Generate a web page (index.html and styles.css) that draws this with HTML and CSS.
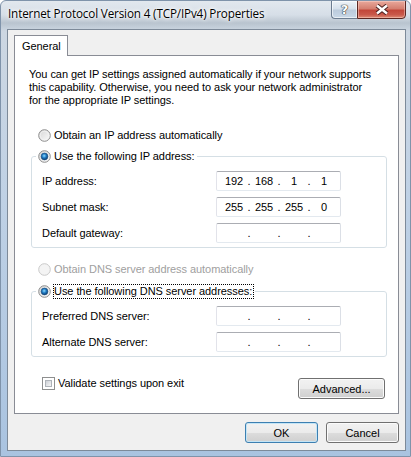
FILE: index.html
```html
<!DOCTYPE html>
<html>
<head>
<meta charset="utf-8">
<link rel="stylesheet" href="styles.css">
</head>
<body>
<div class="window">
  <div class="titlebar">
    <div class="title">Internet Protocol Version 4 (TCP/IPv4) Properties</div>
    <div class="caption-btns">
      <div class="cbtn help">?</div>
      <div class="cbtn close">
        <svg width="14" height="11" viewBox="0 0 14 11">
          <path d="M2 1.5 L12 9.5 M12 1.5 L2 9.5" stroke="#4a2020" stroke-width="4.4" fill="none"/>
          <path d="M2 1.5 L12 9.5 M12 1.5 L2 9.5" stroke="#ffffff" stroke-width="2.4" fill="none"/>
        </svg>
      </div>
    </div>
  </div>
  <div class="client">
    <div class="tabs"><div class="tab">General</div></div>
    <div class="page">
      <p class="intro">You can get IP settings assigned automatically if your network supports<br>this capability. Otherwise, you need to ask your network administrator<br>for the appropriate IP settings.</p>

      <div class="radio-row r-first">
        <svg class="radio" width="13" height="13" viewBox="0 0 13 13">
          <defs><linearGradient id="ru1" x1="0" y1="0" x2="1" y2="1"><stop offset="0" stop-color="#d4d4d4"/><stop offset="1" stop-color="#fcfcfc"/></linearGradient></defs>
          <circle cx="6.5" cy="6.5" r="5.8" fill="url(#ru1)" stroke="#8d8d8d" stroke-width="1"/>
          <circle cx="6.5" cy="6.5" r="4.3" fill="none" stroke="#f4f4f4" stroke-width="0.8"/>
        </svg>
        <span>Obtain an IP address automatically</span>
      </div>

      <fieldset class="group g-ip">
        <legend class="legend">
          <svg class="radio" width="13" height="13" viewBox="0 0 13 13">
            <defs><radialGradient id="rc1" cx="0.45" cy="0.4" r="0.6"><stop offset="0" stop-color="#8fdcff"/><stop offset="0.5" stop-color="#1f7bc4"/><stop offset="1" stop-color="#0b3a6a"/></radialGradient>
            <linearGradient id="ru2" x1="0" y1="0" x2="1" y2="1"><stop offset="0" stop-color="#d4d4d4"/><stop offset="1" stop-color="#fcfcfc"/></linearGradient></defs>
            <circle cx="6.5" cy="6.5" r="5.8" fill="url(#ru2)" stroke="#8d8d8d" stroke-width="1"/>
            <circle cx="6.5" cy="6.5" r="3.4" fill="url(#rc1)" stroke="#1a4f83" stroke-width="0.6"/>
          </svg>
          <span>Use the following IP address:</span>
        </legend>
        <div class="field-grid">
          <span class="lbl">IP address:</span>
          <div class="ipbox"><span class="seg">192</span><span class="dot">.</span><span class="seg">168</span><span class="dot">.</span><span class="seg">1</span><span class="dot">.</span><span class="seg">1</span></div>
          <span class="lbl">Subnet mask:</span>
          <div class="ipbox"><span class="seg">255</span><span class="dot">.</span><span class="seg">255</span><span class="dot">.</span><span class="seg">255</span><span class="dot">.</span><span class="seg">0</span></div>
          <span class="lbl">Default gateway:</span>
          <div class="ipbox"><span class="seg"></span><span class="dot">.</span><span class="seg"></span><span class="dot">.</span><span class="seg"></span><span class="dot">.</span><span class="seg"></span></div>
        </div>
      </fieldset>

      <div class="radio-row r-dns disabled">
        <svg class="radio" width="13" height="13" viewBox="0 0 13 13">
          <circle cx="6.5" cy="6.5" r="5.8" fill="#f4f4f4" stroke="#c9c9c9" stroke-width="1"/>
        </svg>
        <span>Obtain DNS server address automatically</span>
      </div>

      <fieldset class="group g-dns">
        <legend class="legend">
          <svg class="radio" width="13" height="13" viewBox="0 0 13 13">
            <defs><radialGradient id="rc2" cx="0.45" cy="0.4" r="0.6"><stop offset="0" stop-color="#8fdcff"/><stop offset="0.5" stop-color="#1f7bc4"/><stop offset="1" stop-color="#0b3a6a"/></radialGradient>
            <linearGradient id="ru3" x1="0" y1="0" x2="1" y2="1"><stop offset="0" stop-color="#d4d4d4"/><stop offset="1" stop-color="#fcfcfc"/></linearGradient></defs>
            <circle cx="6.5" cy="6.5" r="5.8" fill="url(#ru3)" stroke="#8d8d8d" stroke-width="1"/>
            <circle cx="6.5" cy="6.5" r="3.4" fill="url(#rc2)" stroke="#1a4f83" stroke-width="0.6"/>
          </svg>
          <span class="focus">Use the following DNS server addresses:</span>
        </legend>
        <div class="field-grid">
          <span class="lbl">Preferred DNS server:</span>
          <div class="ipbox"><span class="seg"></span><span class="dot">.</span><span class="seg"></span><span class="dot">.</span><span class="seg"></span><span class="dot">.</span><span class="seg"></span></div>
          <span class="lbl">Alternate DNS server:</span>
          <div class="ipbox"><span class="seg"></span><span class="dot">.</span><span class="seg"></span><span class="dot">.</span><span class="seg"></span><span class="dot">.</span><span class="seg"></span></div>
        </div>
      </fieldset>

      <div class="bottom-row">
        <div class="check-row">
          <span class="check"><span class="check-inner"></span></span>
          <span>Validate settings upon exit</span>
        </div>
        <button class="btn advanced">Advanced...</button>
      </div>
    </div>
    <div class="dialog-btns">
      <button class="btn ok">OK</button>
      <button class="btn cancel">Cancel</button>
    </div>
  </div>
</div>
</body>
</html>
```

FILE: styles.css
```css
html, body {
  margin: 0;
  padding: 0;
}
body {
  font-family: "Liberation Sans", Arial, sans-serif;
  font-size: 11px;
  line-height: 13px;
  letter-spacing: -0.06px;
  color: #000;
  background: #fff;
}
.window {
  width: 411px;
  height: 457px;
  box-sizing: border-box;
  border: 1px solid #7f93aa;
  border-radius: 6px 6px 0 0;
  overflow: hidden;
  display: flex;
  flex-direction: column;
  background: linear-gradient(to bottom, #e2e8ee 0px, #d6dee7 14px, #b9c4cf 22px, #cdd7e2 30px, #bfd1e5 200px, #a9c3e0 457px);
}
.titlebar {
  height: 28px;
  display: flex;
  justify-content: space-between;
  align-items: flex-start;
  flex: none;
}
.title {
  font-family: "Open Sans", "Liberation Sans", sans-serif;
  font-size: 11.7px;
  letter-spacing: -0.15px;
  padding: 4px 0 0 7px;
  line-height: 16px;
  color: #000;
  text-shadow: 0 0 6px #fff, 0 0 4px #fff, 0 0 2px #fff;
}
.caption-btns {
  display: flex;
  margin-right: 4px;
  margin-top: -1px;
}
.cbtn {
  height: 19px;
  box-sizing: border-box;
  display: flex;
  align-items: center;
  justify-content: center;
}
.help {
  width: 26px;
  border: 1px solid #6c7c90;
  border-right: none;
  border-radius: 0 0 0 4px;
  background: linear-gradient(to bottom, #eef3f8 0%, #d7e1ec 45%, #bccbdc 55%, #c9d8e8 100%);
  box-shadow: inset 0 0 0 1px rgba(255,255,255,0.6);
  color: #fff;
  font-family: "DejaVu Sans", sans-serif;
  font-weight: bold;
  font-size: 13px;
  text-shadow: 0 0 1px #333, 0 0 1px #333, 0 0 1px #333;
}
.close {
  width: 49px;
  border: 1px solid #5b2621;
  border-radius: 0 0 4px 0;
  background: linear-gradient(to bottom, #e9a99c 0%, #d47f70 45%, #c2473a 55%, #c9584a 80%, #dd8a74 100%);
  box-shadow: inset 0 0 0 1px rgba(255,220,210,0.45);
}
.client {
  flex: 1;
  margin: 0 4px 5px 6px;
  border: 1px solid #7d8a99;
  background: #f0f0f0;
  padding: 5px 6px 0 6px;
  display: flex;
  flex-direction: column;
}
.tabs {
  display: flex;
  position: relative;
  z-index: 1;
}
.tab {
  width: 54px;
  height: 21px;
  box-sizing: border-box;
  border: 1px solid #898c95;
  border-bottom: none;
  background: #fff;
  padding: 4px 0 0 7px;
  margin-bottom: -1px;
}
.page {
  height: 359px;
  box-sizing: border-box;
  border: 1px solid #898c95;
  background: #fff;
  padding: 12px 11px 0 14px;
}
.intro {
  margin: 0;
}
.radio-row {
  display: flex;
  align-items: center;
  height: 13px;
  padding-left: 9px;
}
.radio {
  flex: none;
  display: block;
  margin-right: 3px;
}
.r-first {
  margin-top: 22px;
}
.r-dns {
  margin-top: 15px;
}
.disabled {
  color: #a0a0a0;
}
.group {
  margin: 8px 0 0 2px;
  padding: 0 0 4px 10px;
  border: 1px solid #d5dfe5;
  border-radius: 3px;
  min-width: 0;
}
.g-dns {
  margin-top: 9px;
}
.legend {
  display: flex;
  align-items: center;
  padding: 0 2px;
  margin-left: -6px;
  height: 13px;
}
.focus {
  outline: 1px dotted #000;
  outline-offset: 0;
  padding: 0 1px 0 0;
}
.field-grid {
  display: grid;
  grid-template-columns: 174px 125px;
  grid-auto-rows: 20px;
  row-gap: 6px;
  align-items: center;
  padding-top: 8px;
}
.ipbox {
  width: 125px;
  height: 20px;
  box-sizing: border-box;
  border: 1px solid;
  border-color: #abadb3 #dbdfe6 #e3e9ef #e2e3ea;
  border-radius: 2px;
  background: #fff;
  display: flex;
  align-items: center;
  padding-left: 5px;
}
.seg {
  width: 24px;
  text-align: center;
}
.dot {
  width: 6px;
  text-align: center;
}
.bottom-row {
  margin-top: 20px;
  padding-left: 13px;
  padding-right: 2px;
  display: flex;
  justify-content: space-between;
  align-items: flex-start;
}
.check-row {
  display: flex;
  align-items: center;
  height: 13px;
}
.check {
  width: 13px;
  height: 13px;
  box-sizing: border-box;
  border: 1px solid #8e8f8f;
  background: #fff;
  padding: 2px;
  margin-right: 3px;
  display: block;
}
.check-inner {
  display: block;
  width: 100%;
  height: 100%;
  box-sizing: border-box;
  border: 1px solid #aeb3b9;
  background: linear-gradient(135deg, #cbcfd5 0%, #f6f6f6 100%);
}
.btn {
  font-family: inherit;
  font-size: 11px;
  color: #000;
  height: 21px;
  box-sizing: border-box;
  border: 1px solid #707070;
  border-radius: 3px;
  background: linear-gradient(to bottom, #f2f2f2 0%, #ebebeb 50%, #dddddd 50%, #cfcfcf 100%);
  box-shadow: inset 0 0 0 1px #fbfbfb;
  padding: 0;
}
.advanced {
  width: 87px;
  margin-top: 1px;
}
.dialog-btns {
  display: flex;
  justify-content: flex-end;
  gap: 8px;
  margin-top: 8px;
}
.ok, .cancel {
  width: 73px;
}
.ok {
  border-color: #3c7fb1;
  box-shadow: inset 0 0 0 1px #c4e5f6;
}
```
